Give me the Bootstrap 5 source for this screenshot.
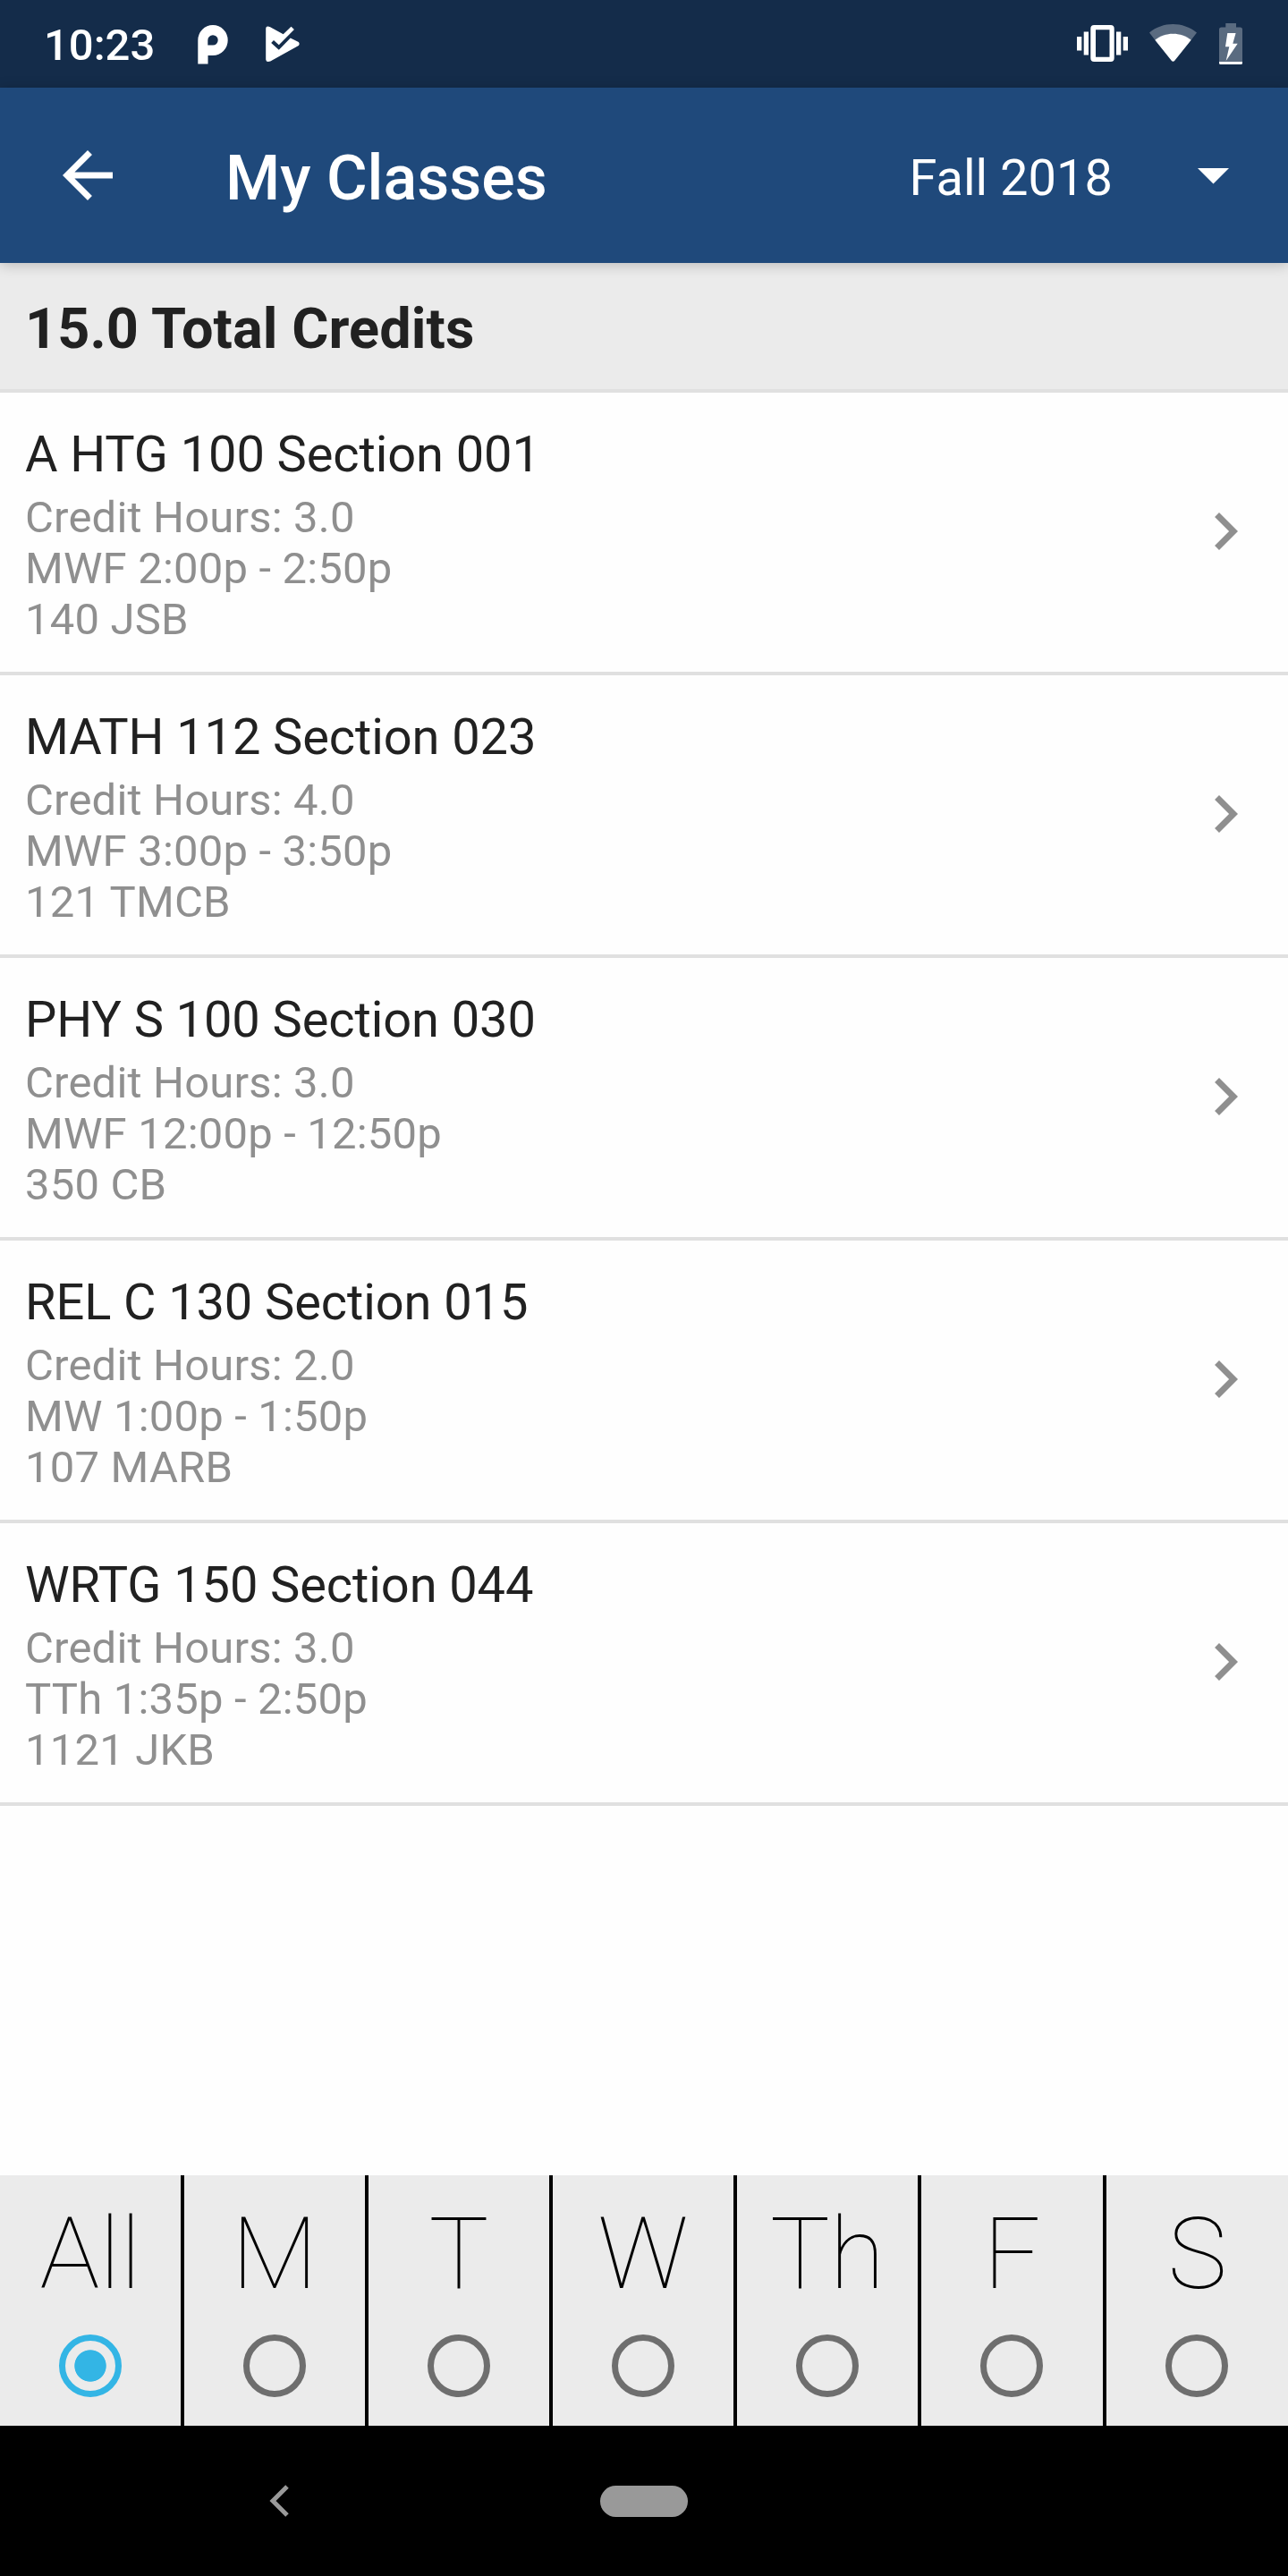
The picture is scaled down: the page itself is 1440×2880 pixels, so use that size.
<!DOCTYPE html>
<html lang="en">
<head>
<meta charset="utf-8">
<meta name="viewport" content="width=device-width, initial-scale=1">
<title>My Classes</title>
<link href="https://cdn.jsdelivr.net/npm/bootstrap@5.3.0/dist/css/bootstrap.min.css" rel="stylesheet">
<style>
  body { font-family: Roboto, "Liberation Sans", sans-serif; background: #fefefe; color: #212121; }
  .screen { width: 1440px; height: 2880px; overflow: hidden; }
  svg { display: block; flex: none; }
  .status-bar { height: 98px; background: #142c4a; padding: 0 51px 0 49px; color: #fff; }
  .clock { width: 171.500px; font-size: 49px; font-weight: 500; line-height: 58px; padding-top: 4px; }
  .icon-play { margin-left: 42px; }
  .icon-wifi { margin: 0 25px 0 23px; }
  .app-bar { height: 196px; background: #1f497b; color: #fff; padding: 0 56px; box-shadow: 0 2px 14px rgba(0,0,0,.22); z-index: 1; }
  .page-title { font-size: 70px; font-weight: 500; line-height: 82px; margin: 6px 0 0 112px; }
  .term { font-size: 56px; line-height: 66px; padding-top: 5px; }
  .term svg { margin: -3px 10px 0 95px; }
  .credits { height: 145px; background: #ebebeb; border-bottom: 4px solid #e0e0e0; padding: 7px 28px 0; font-size: 63px; line-height: 74px; font-weight: 700; letter-spacing: .08px; }
  .list-group-flush > .list-group-item.class-row { height: 316px; border: 0; border-bottom: 4px solid #e0e0e0; padding: 35px 28px 30px; background: transparent; color: #212121; }
  .class-row svg { margin-top: 78px; }
  .class-name { font-size: 56px; line-height: 66px; margin: 1px 0 9px; font-weight: 400; letter-spacing: -.1px; }
  .class-info { font-size: 49px; line-height: 57px; color: #8f8f8f; letter-spacing: .18px; }
  .days { height: 280px; background: #ebebeb; color: #000; }
  .day { width: 206px; border-right: 4px solid #000; padding-top: 22px; cursor: pointer; }
  .day:nth-child(6) { width: 207px; }
  .day:last-child { width: 203px; border-right: 0; }
  .day-name { font-size: 112px; line-height: 132px; font-weight: 100; }
  .day input { appearance: none; width: 70px; height: 70px; border: 7px solid #6e6e6e; border-radius: 50%; margin: 24px 0 0; display: block; }
  .day:nth-child(n+6) input { margin-right: 1px; }
  .day input:checked { border-color: #33b5e5; background: radial-gradient(circle, #33b5e5 17.300px, transparent 18.100px); }
  .nav-bar { height: 168px; background: #000; }
  .nav-bar > * { flex: 1 1 0; }
  .nav-back svg { margin-right: 20px; }
  .nav-bar .home-pill { flex: none; width: 98px; height: 35px; border-radius: 18px; background: #999; }
</style>
</head>
<body>
<div class="screen d-flex flex-column">
  <div class="status-bar d-flex align-items-center flex-shrink-0">
    <span class="clock">10:23</span>
    <svg width="34" height="98" viewBox="220.5 0 34 98" fill="#fff"><path fill-rule="evenodd" d="M220.8 71.5V44.9a16.7 16.9 0 0 1 33.4 0A16.7 17 0 0 1 237.5 62H232v9.5zM231.8 50.6V45a5.7 5.7 0 1 1 5.7 5.6z"/></svg>
    <svg class="icon-play" width="38" height="98" viewBox="296.5 0 38 98" fill="#fff"><path d="M301.6 30.2 316.2 38.2 325 29.8 328.4 33 311.3 50.2 305.5 45 302.7 47.9 311.3 55.8 324.2 42.5 333.3 47Q335 49 333.3 51L301.8 68.6Q297 70.2 296.7 66.5V31.8Q297 28 301.6 30.2z"/></svg>
    <div class="d-flex ms-auto">
      <svg width="58" height="98" viewBox="1204 0 58 98" fill="#fff"><path d="M1204 41h5.3v15.5h-5.3zM1211.7 35.5h5.3v26h-5.3zM1248 35.5h5.3v26h-5.3zM1255.7 41h5.3v15.5h-5.3z"/><path fill-rule="evenodd" d="M1223.2 28h18.6q3.9 0 3.9 3.9v33.2q0 3.9-3.9 3.9h-18.6q-3.9 0-3.9-3.9v-33.2q0-3.9 3.9-3.9zM1225 33.2v30.6h15.5V33.2z"/></svg>
      <svg class="icon-wifi" width="53" height="98" viewBox="1285 0 53 98" fill="#fff"><path opacity=".3" d="M1285 36.5C1300 23.8 1322.600 23.800 1338 36.500L1331.500 45C1319 35.200 1304 35.200 1291.500 45z"/><path d="M1291.300 44.800C1302 35.300 1321 35.300 1331.700 44.800L1313.500 67.500Q1311.500 69.900 1309.500 67.500z"/></svg>
      <svg width="26" height="98" viewBox="1363 0 26 98" fill="#fff"><path opacity=".3" d="M1370.300 26h11.700v4.500h4.500q2.500 0 2.500 2.500v36h-26v-36q0-2.500 2.500-2.500h4.800z"/><path d="M1363 69h26v1.500q0 1.500-1.500 1.500h-23q-1.500 0-1.500-1.500zM1372.300 37h9.300l-3.300 11.700h5.400L1370.700 68l3.600-15.700h-4.300z"/></svg>
    </div>
  </div>

  <header class="app-bar d-flex align-items-center flex-shrink-0 position-relative">
    <svg width="84" height="84" viewBox="0 0 24 24" fill="#fff"><path d="M20 11H7.830l5.590-5.590L12 4l-8 8 8 8 1.410-1.410L7.830 13H20z"/></svg>
    <h1 class="page-title">My Classes</h1>
    <div class="term d-flex align-items-center ms-auto"><span>Fall 2018</span><svg width="35" height="18" viewBox="0 0 35 18" fill="#fff"><path d="M0 0h35L17.500 17.500z"/></svg></div>
  </header>

  <main class="flex-grow-1">
    <div class="credits d-flex align-items-center">15.0 Total Credits</div>
    <div class="list-group list-group-flush" id="classes"></div>
  </main>

  <div class="days d-flex flex-shrink-0" id="days"></div>

  <nav class="nav-bar d-flex align-items-center flex-shrink-0">
    <div class="nav-back d-flex justify-content-center"><svg width="50" height="36" viewBox="0 0 50 36" fill="none" stroke="#999" stroke-width="5"><path d="M20 2 4 18l16 16"/></svg></div>
    <span class="home-pill"></span>
    <div></div>
  </nav>
</div>
<script src="https://cdn.jsdelivr.net/npm/bootstrap@5.3.0/dist/js/bootstrap.bundle.min.js"></script>
<script>
  const classes = [
    ["A HTG 100 Section 001", "3.0", "MWF 2:00p - 2:50p", "140 JSB"],
    ["MATH 112 Section 023", "4.0", "MWF 3:00p - 3:50p", "121 TMCB"],
    ["PHY S 100 Section 030", "3.0", "MWF 12:00p - 12:50p", "350 CB"],
    ["REL C 130 Section 015", "2.0", "MW 1:00p - 1:50p", "107 MARB"],
    ["WRTG 150 Section 044", "3.0", "TTh 1:35p - 2:50p", "1121 JKB"]
  ];
  document.getElementById("classes").innerHTML = classes.map(([name, hours, time, room]) => `
    <div class="class-row list-group-item d-flex justify-content-between">
      <div>
        <h2 class="class-name">${name}</h2>
        <div class="class-info">Credit Hours: ${hours}</div>
        <div class="class-info">${time}</div>
        <div class="class-info">${room}</div>
      </div>
      <svg width="84" height="84" viewBox="0 0 24 24" fill="#8f8f8f"><path d="M10 6 8.590 7.410 13.170 12l-4.580 4.590L10 18l6-6z"/></svg>
    </div>`).join("");
  document.getElementById("days").innerHTML = ["All", "M", "T", "W", "Th", "F", "S"].map((d, i) => `
    <label class="day d-flex flex-column align-items-center">
      <span class="day-name">${d}</span>
      <input type="radio" name="day"${i ? "" : " checked"}>
    </label>`).join("");
</script>
</body>
</html>
